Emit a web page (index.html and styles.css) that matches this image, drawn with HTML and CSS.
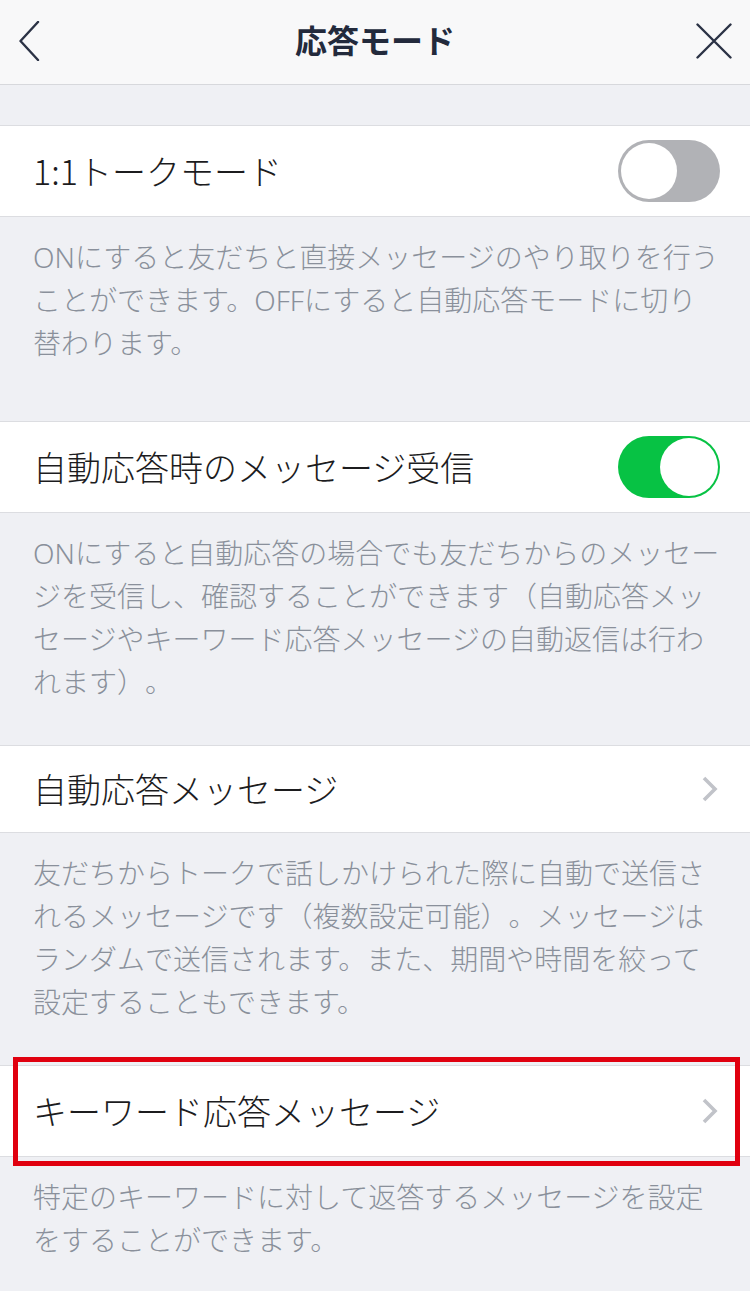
FILE: index.html
```html
<!DOCTYPE html>
<html lang="ja">
<head>
<meta charset="utf-8">
<title>応答モード</title>
<link rel="stylesheet" href="styles.css">
</head>
<body>
<header class="nav">
  <button class="nav-btn nav-back" aria-label="戻る">
    <svg width="22" height="40" viewBox="0 0 22 40"><path d="M20 1 L2.5 20 L20 39" fill="none" stroke="#2b3245" stroke-width="2.4" stroke-linecap="round" stroke-linejoin="round"/></svg>
  </button>
  <h1 class="nav-title">応答モード</h1>
  <button class="nav-btn nav-close" aria-label="閉じる">
    <svg width="36" height="36" viewBox="0 0 36 36"><path d="M1.5 1.5 L34.5 34.5 M34.5 1.5 L1.5 34.5" fill="none" stroke="#2b3245" stroke-width="2.4" stroke-linecap="round"/></svg>
  </button>
</header>
<main class="settings">
  <section class="group">
    <div class="row">
      <span class="row-label">1:1トークモード</span>
      <span class="switch"></span>
    </div>
    <p class="note note--spaced">ONにすると友だちと直接メッセージのやり取りを行うことができます。OFFにすると自動応答モードに切り替わります。</p>
  </section>
  <section class="group">
    <div class="row">
      <span class="row-label">自動応答時のメッセージ受信</span>
      <span class="switch switch--on"></span>
    </div>
    <p class="note">ONにすると自動応答の場合でも友だちからのメッセージを受信し、確認することができます（自動応答メッセージやキーワード応答メッセージの自動返信は行われます）。</p>
  </section>
  <section class="group">
    <div class="row row--compact">
      <span class="row-label">自動応答メッセージ</span>
      <svg class="chevron" width="18" height="26" viewBox="0 0 18 26"><path d="M3 2 L14 13 L3 24" fill="none" stroke="#c1c3c9" stroke-width="3.6" stroke-linejoin="miter"/></svg>
    </div>
    <p class="note">友だちからトークで話しかけられた際に自動で送信されるメッセージです（複数設定可能）。メッセージはランダムで送信されます。また、期間や時間を絞って設定することもできます。</p>
  </section>
  <section class="group">
    <div class="row row--highlight">
      <span class="row-label">キーワード応答メッセージ</span>
      <svg class="chevron" width="18" height="26" viewBox="0 0 18 26"><path d="M3 2 L14 13 L3 24" fill="none" stroke="#c1c3c9" stroke-width="3.6" stroke-linejoin="miter"/></svg>
    </div>
    <p class="note">特定のキーワードに対して返答するメッセージを設定をすることができます。</p>
  </section>
</main>
</body>
</html>
```
FILE: styles.css
```css
* { box-sizing: border-box; }

html, body {
  margin: 0;
  padding: 0;
}

body {
  background: #eff0f4;
  font-family: "Noto Sans CJK JP", "Noto Sans", sans-serif;
  text-spacing-trim: space-all;
  width: 750px;
  min-height: 1291px;
}

.nav {
  height: 85px;
  background: #f8f8f9;
  border-bottom: 1px solid #d7d8dc;
  display: grid;
  grid-template-columns: 1fr auto 1fr;
  align-items: center;
  padding: 0 18px 3px 18px;
}

.nav-btn {
  background: none;
  border: 0;
  padding: 0;
  display: flex;
  align-items: center;
}

.nav-back { justify-self: start; }
.nav-close { justify-self: end; }

.nav-title {
  margin: 0 0 4px;
  font-size: 32px;
  font-weight: 700;
  color: #232a3c;
  line-height: 1;
}

.settings {
  padding-top: 40px;
}

.row {
  position: relative;
  min-height: 92px;
  background: #fff;
  border-top: 1px solid #dcdde1;
  border-bottom: 1px solid #dcdde1;
  display: flex;
  align-items: center;
  justify-content: space-between;
  padding: 0 30px 0 33px;
}

.row--compact { min-height: 88px; }

.row-label {
  font-size: 34px;
  font-weight: 300;
  color: #1c1c1e;
  line-height: 1;
}

.chevron { margin-right: 1px; }

.switch {
  position: relative;
  width: 102px;
  height: 62px;
  border-radius: 31px;
  background: #b1b2b6;
}

.switch::after {
  content: "";
  position: absolute;
  top: 3px;
  left: 3px;
  width: 56px;
  height: 56px;
  border-radius: 50%;
  background: #fff;
}

.switch--on { background: #07c244; }
.switch--on::after { left: auto; right: 2px; top: 2px; width: 58px; height: 58px; }

.note {
  margin: 0 0 41px;
  padding: 19px 30px 0 33px;
  font-family: "Noto Sans", "Noto Sans CJK JP", sans-serif;
  font-size: 28px;
  font-weight: 300;
  line-height: 43px;
  color: #8a909b;
}

.note--spaced { margin-bottom: 56px; }

.row--highlight::after {
  content: "";
  position: absolute;
  top: -9px;
  bottom: -10px;
  left: 13px;
  right: 10px;
  border: 5px solid #e0000f;
  pointer-events: none;
}
```
